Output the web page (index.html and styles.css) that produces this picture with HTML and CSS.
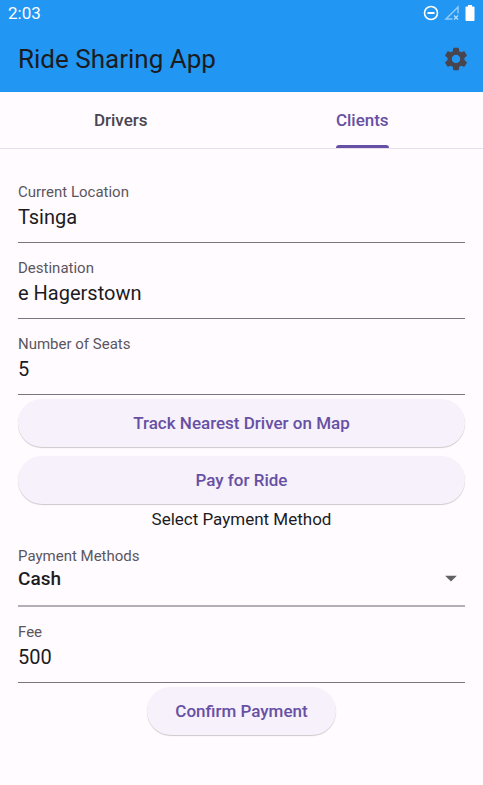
FILE: index.html
```html
<!DOCTYPE html>
<html lang="en">
<head>
  <meta charset="utf-8">
  <meta name="viewport" content="width=device-width, initial-scale=1">
  <title>Ride Sharing App</title>
  <link rel="stylesheet" href="styles.css">
</head>
<body>
  <header class="app-header">
    <div class="status-bar">
      <span>2:03</span>
      <div class="status-icons">
        <svg width="16" height="16" viewBox="0 0 16 16" fill="none" stroke="#fff" stroke-width="2" aria-hidden="true">
          <circle cx="8" cy="8" r="6.5" stroke-width="1.6"/>
          <path d="M4.5 8h7"/>
        </svg>
        <svg width="16" height="16" viewBox="0 0 16 16" aria-hidden="true">
          <path d="M8.500 14H2L14 2V8.500" fill="none" stroke="#fff" stroke-opacity=".5" stroke-width="1.5"/>
          <path d="M10 10.500l4 4m0-4l-4 4" stroke="#fff" stroke-opacity=".7" stroke-width="1.2"/>
        </svg>
        <svg width="10" height="16" viewBox="0 0 10 16" aria-hidden="true">
          <path d="M3 0h4v1.500h1.500q1 0 1 1V15q0 1-1 1h-7q-1 0-1-1V2.500q0-1 1-1H3z" fill="#fff"/>
        </svg>
      </div>
    </div>
    <div class="toolbar">
      <h1 class="title">Ride Sharing App</h1>
      <button class="icon-button" type="button" aria-label="Settings">
        <svg width="28" height="28" viewBox="0 0 24 24" fill="#49454f" aria-hidden="true">
          <path d="M19.140 12.940c.04-.3.06-.61.06-.94 0-.32-.02-.64-.07-.94l2.030-1.580c.18-.14.23-.41.12-.61l-1.920-3.320c-.12-.22-.37-.29-.59-.22l-2.390.96c-.5-.38-1.030-.7-1.620-.94l-.36-2.540c-.04-.24-.24-.41-.48-.41h-3.840c-.24 0-.43.17-.47.41l-.36 2.540c-.59.24-1.130.57-1.620.94l-2.390-.96c-.22-.08-.47 0-.59.22L2.740 8.870c-.12.21-.08.47.12.61l2.030 1.580c-.05.3-.09.63-.09.94s.02.64.07.94l-2.030 1.580c-.18.14-.23.41-.12.61l1.920 3.320c.12.22.37.29.59.22l2.390-.96c.5.38 1.030.7 1.620.94l.36 2.540c.05.24.24.41.48.41h3.840c.24 0 .44-.17.47-.41l.36-2.540c.59-.24 1.130-.56 1.620-.94l2.390.96c.22.08.47 0 .59-.22l1.920-3.320c.12-.22.07-.47-.12-.61zM12 15.600c-1.980 0-3.600-1.620-3.600-3.600s1.620-3.600 3.600-3.600 3.600 1.620 3.600 3.600-1.620 3.600-3.600 3.600z"/>
        </svg>
      </button>
    </div>
  </header>

  <nav class="tabs" aria-label="User type">
    <a class="tab" href="#drivers"><span class="tab-label">Drivers</span></a>
    <a class="tab tab-active" href="#clients" aria-current="page"><span class="tab-label">Clients</span></a>
  </nav>

  <main>
    <form class="ride-form">
      <div class="field">
        <label for="location">Current Location</label>
        <input id="location" type="text" value="Tsinga">
      </div>
      <div class="field">
        <label for="destination">Destination</label>
        <input id="destination" type="text" value="e Hagerstown">
      </div>
      <div class="field">
        <label for="seats">Number of Seats</label>
        <input id="seats" type="text" inputmode="numeric" value="5">
      </div>
      <div class="actions">
        <button class="button" type="button">Track Nearest Driver on Map</button>
        <button class="button" type="button">Pay for Ride</button>
      </div>
      <p class="hint">Select Payment Method</p>
      <div class="field field-select">
        <label for="method">Payment Methods</label>
        <div class="select-row">
          <select id="method">
            <option>Cash</option>
          </select>
          <svg class="caret" width="28" height="28" viewBox="0 0 24 24" fill="#616161" aria-hidden="true"><path d="M7 10l5 5 5-5z"/></svg>
        </div>
      </div>
      <div class="field">
        <label for="fee">Fee</label>
        <input id="fee" type="text" inputmode="numeric" value="500">
      </div>
      <div class="actions actions-center">
        <button class="button" type="submit">Confirm Payment</button>
      </div>
    </form>
  </main>
</body>
</html>
```
FILE: styles.css
```css
* {
  box-sizing: border-box;
}

body {
  margin: 0;
  background: #fffbff;
  color: #1c1b1f;
  font-family: Roboto, "Liberation Sans", sans-serif;
}

.app-header {
  background: #2196f3;
}

.status-bar {
  display: flex;
  align-items: center;
  justify-content: space-between;
  height: 25px;
  padding: 0 8px;
  color: #fff;
  font-size: 17px;
}

.status-icons {
  display: flex;
  align-items: center;
  gap: 5px;
}

.toolbar {
  display: flex;
  align-items: center;
  justify-content: space-between;
  height: 67px;
  padding: 0 13px 0 18px;
}

.title {
  margin: 0;
  font-size: 26px;
  font-weight: 400;
}

.icon-button {
  display: flex;
  padding: 0;
  border: 0;
  background: none;
}

.tabs {
  display: flex;
  height: 57px;
  border-bottom: 1px solid #e7e0ec;
}

.tab {
  display: flex;
  flex: 1;
  justify-content: center;
  color: #49454f;
  font-size: 17px;
  font-weight: 500;
  line-height: 56px;
  text-decoration: none;
}

.tab-active {
  color: #6750a4;
}

.tab-label {
  position: relative;
}

.tab-active .tab-label::after {
  content: "";
  position: absolute;
  right: 0;
  bottom: 0;
  left: 0;
  height: 3px;
  border-radius: 3px 3px 0 0;
  background: #6750a4;
}

.ride-form {
  padding: 18px;
}

.field {
  display: flex;
  flex-direction: column;
  gap: 5px;
  padding: 17px 0 13px;
  border-bottom: 1px solid #79747e;
}

.field label {
  color: #5a5660;
  font-size: 15px;
  line-height: 16px;
}

.field input,
.field select {
  width: 100%;
  height: 24px;
  padding: 0;
  border: 0;
  outline: 0;
  background: none;
  color: #1c1b1f;
  font-family: inherit;
  font-size: 20px;
}

.field-select {
  gap: 2px;
  padding-bottom: 15px;
  border-bottom: 2px solid #b4afb6;
}

.field select {
  appearance: none;
  font-size: 19px;
  font-weight: 500;
}

.select-row {
  display: flex;
  align-items: center;
  height: 24px;
}

.caret {
  flex: none;
  pointer-events: none;
}

.actions {
  display: flex;
  flex-direction: column;
  gap: 9px;
  padding-top: 4px;
}

.actions-center {
  align-items: center;
}

.button {
  height: 48px;
  padding: 0 28px;
  border: 0;
  border-radius: 24px;
  background: #f6f1fa;
  box-shadow: 0 1px 1px rgba(0, 0, 0, 0.2);
  color: #6750a4;
  font-family: inherit;
  font-size: 17px;
  font-weight: 500;
}

.hint {
  margin: 4px 0 0;
  font-size: 17px;
  line-height: 23px;
  text-align: center;
}
```
